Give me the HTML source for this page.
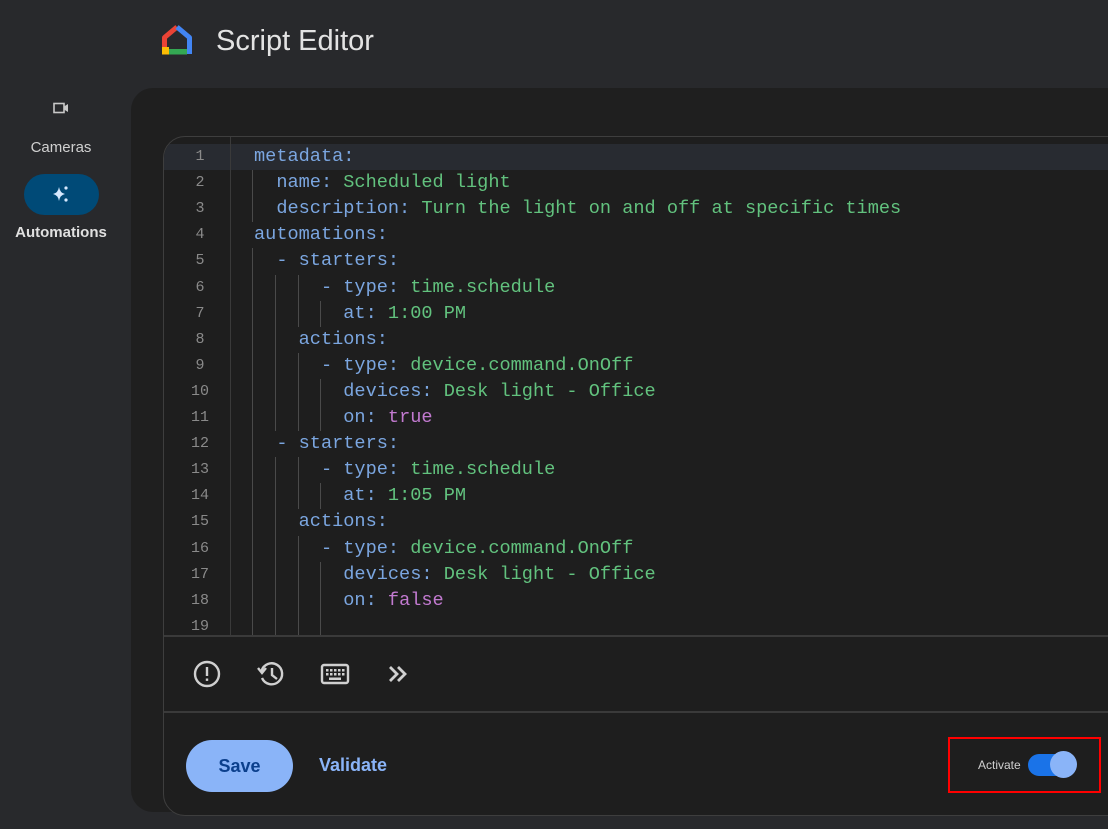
<!DOCTYPE html>
<html><head><meta charset="utf-8"><style>
*{margin:0;padding:0;box-sizing:border-box}
body{width:1108px;height:829px;background:#28292c;overflow:hidden;position:relative;font-family:"Liberation Sans",sans-serif}
.title{position:absolute;left:216px;top:25px;font-size:29px;color:#e3e3e3}
.panel{position:absolute;left:131px;top:88px;width:1000px;height:724px;background:#1f1f1f;border-radius:22px}
.ed{position:absolute;left:163px;top:136px;width:980px;height:680px;border:1.5px solid #3e3e3e;border-radius:22px;overflow:hidden;background:#1e1e1e}
.gut{position:absolute;left:0;top:0;width:67px;height:498px;border-right:1.5px solid #3a3a3a}
.hl{position:absolute;left:0;top:7px;width:980px;height:26px;background:#282b31}
.ln{position:absolute;left:0;width:72px;text-align:center;font:15px "Liberation Mono",monospace;color:#8a8a8a;height:26px;line-height:26px}
.cl{position:absolute;left:90px;font:18.6px "Liberation Mono",monospace;white-space:pre;height:26px;line-height:26px;color:#7ba6e0}
.g{color:#62c27e}.p{color:#c27ad0}
.gd{position:absolute;width:1px;background:#4a4a4a}
.div{position:absolute;left:0;width:980px;height:1.5px;background:#3a3a3a}
.save{position:absolute;left:22px;top:603px;width:107px;height:52px;border-radius:26px;background:#8ab4f8;color:#0b3f8c;font-weight:bold;font-size:18px;text-align:center;line-height:52px}
.val{position:absolute;left:155px;top:618px;color:#8ab4f8;font-weight:bold;font-size:18px}
</style></head><body>
<svg style="position:absolute;left:161px;top:24px" width="32" height="31" viewBox="0 0 32 31">
<path d="M16 3 L3.5 13.5 V24" fill="none" stroke="#ea4335" stroke-width="5" stroke-linejoin="round"/>
<path d="M16 3 L28.5 13.5 V30" fill="none" stroke="#4285f4" stroke-width="5" stroke-linejoin="round"/>
<rect x="1" y="23" width="7" height="7.5" fill="#fbbc04"/>
<rect x="8" y="25" width="18" height="5.5" fill="#34a853"/>
</svg>
<div class="title">Script Editor</div>
<svg style="position:absolute;left:53px;top:102px" width="16" height="12" viewBox="0 0 16 12"><rect x="1" y="1.5" width="10" height="9" fill="none" stroke="#c8c8c8" stroke-width="1.6"/><path d="M11 4.5 L15 2 V10 L11 7.5Z" fill="#c8c8c8"/></svg>
<div style="position:absolute;left:0;width:122px;top:139px;text-align:center;color:#d0d0d0;font-size:15px">Cameras</div>
<div style="position:absolute;left:24px;top:174px;width:75px;height:41px;border-radius:21px;background:#004a77"></div>
<svg style="position:absolute;left:51px;top:184px" width="20" height="20" viewBox="0 0 20 20"><path d="M8 3 Q9 9 14 10 Q9 11 8 17 Q7 11 2 10 Q7 9 8 3Z" fill="#d6e9ff"/><circle cx="15" cy="4" r="1.6" fill="#d6e9ff"/><circle cx="15" cy="16" r="1.6" fill="#d6e9ff"/></svg>
<div style="position:absolute;left:0;width:122px;top:224px;text-align:center;color:#e0e0e0;font-size:15px;font-weight:bold">Automations</div>
<div class="panel"></div>
<div class="ed">
<div class="hl"></div>
<div class="gut"></div>
<div id="code"></div>
<div class="div" style="top:498px"></div>
<div class="div" style="top:574px"></div>
<svg style="position:absolute;left:28px;top:522px" width="30" height="30" viewBox="0 0 30 30"><circle cx="15" cy="15" r="12" fill="none" stroke="#d0d0d0" stroke-width="2.4"/><rect x="13.8" y="8" width="2.4" height="9" fill="#d0d0d0"/><rect x="13.8" y="19.5" width="2.4" height="2.4" fill="#d0d0d0"/></svg>
<svg style="position:absolute;left:92px;top:522px" width="30" height="30" viewBox="0 0 30 30"><path d="M5.5 12 A10.5 10.5 0 1 1 6 19" fill="none" stroke="#d0d0d0" stroke-width="2.4"/><path d="M2 9 L6 14 L10 9" fill="none" stroke="#d0d0d0" stroke-width="2.4"/><path d="M16 9 V16 L21 20" fill="none" stroke="#d0d0d0" stroke-width="2.4"/></svg>
<svg style="position:absolute;left:156px;top:525px" width="30" height="24" viewBox="0 0 30 24"><rect x="2" y="3" width="26" height="18" rx="2" fill="none" stroke="#d0d0d0" stroke-width="2.4"/><g fill="#d0d0d0"><rect x="6" y="7" width="2.5" height="2.5"/><rect x="10" y="7" width="2.5" height="2.5"/><rect x="14" y="7" width="2.5" height="2.5"/><rect x="18" y="7" width="2.5" height="2.5"/><rect x="22" y="7" width="2.5" height="2.5"/><rect x="6" y="11" width="2.5" height="2.5"/><rect x="10" y="11" width="2.5" height="2.5"/><rect x="14" y="11" width="2.5" height="2.5"/><rect x="18" y="11" width="2.5" height="2.5"/><rect x="22" y="11" width="2.5" height="2.5"/><rect x="9" y="15.5" width="12" height="2.5"/></g></svg>
<svg style="position:absolute;left:222px;top:525px" width="26" height="24" viewBox="0 0 26 24"><path d="M4 5 L11 12 L4 19 M12 5 L19 12 L12 19" fill="none" stroke="#d0d0d0" stroke-width="2.8"/></svg>
<div class="save">Save</div>
<div class="val">Validate</div>
<div style="position:absolute;left:814px;top:621px;color:#d0d0d0;font-size:12px">Activate</div>
<div style="position:absolute;left:864px;top:617px;width:44px;height:22px;border-radius:11px;background:#1a73e8"></div>
<div style="position:absolute;left:886px;top:614px;width:27px;height:27px;border-radius:50%;background:#8ab4f8"></div>
</div>
<div style="position:absolute;left:948px;top:737px;width:153px;height:56px;border:2px solid #ff0000"></div>
<script>
var L=[
'<span>metadata:</span>',
'  name: <span class="g">Scheduled light</span>',
'  description: <span class="g">Turn the light on and off at specific times</span>',
'automations:',
'  - starters:',
'      - type: <span class="g">time.schedule</span>',
'        at: <span class="g">1:00 PM</span>',
'    actions:',
'      - type: <span class="g">device.command.OnOff</span>',
'        devices: <span class="g">Desk light - Office</span>',
'        on: <span class="p">true</span>',
'  - starters:',
'      - type: <span class="g">time.schedule</span>',
'        at: <span class="g">1:05 PM</span>',
'    actions:',
'      - type: <span class="g">device.command.OnOff</span>',
'        devices: <span class="g">Desk light - Office</span>',
'        on: <span class="p">false</span>',
''];
var h='',T=7,H=26.1;
for(var i=0;i<19;i++){var y=T+H*i;h+='<div class="ln" style="top:'+y+'px">'+(i+1)+'</div><div class="cl" style="top:'+y+'px">'+L[i]+'</div>';}
function gd(x,a,b){var y1=T+H*(a-1),y2=Math.min(T+H*b,498);h+='<div class="gd" style="left:'+x+'px;top:'+y1+'px;height:'+(y2-y1)+'px"></div>';}
gd(88,2,3);gd(88,5,19);
gd(111,6,11);gd(111,13,19);
gd(134,6,7);gd(134,9,11);gd(134,13,14);gd(134,16,19);
gd(156,7,7);gd(156,10,11);gd(156,14,14);gd(156,17,19);
document.getElementById('code').innerHTML=h;
</script>
</body></html>
